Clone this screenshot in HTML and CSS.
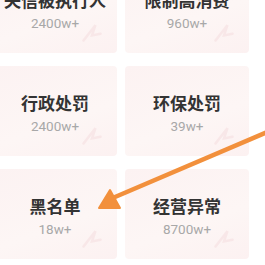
FILE: index.html
```html
<!DOCTYPE html>
<html lang="zh">
<head>
    <meta charset="UTF-8">
    <title>风险类别</title>
    <link rel="stylesheet" href="styles.css">
</head>
<body>
    <div class="grid">
        <div class="card">
            <div class="titulo">失信被执行人</div>
            <div class="numero">2400w+</div>
            <svg class="marca" viewBox="0 0 40 40"><path d="M10 30 L24 12 L20 24 L30 22" fill="none" stroke="#f3d6d8" stroke-width="3" stroke-linecap="round"/></svg>
        </div>
        <div class="card">
            <div class="titulo">限制高消费</div>
            <div class="numero">960w+</div>
            <svg class="marca" viewBox="0 0 40 40"><path d="M10 30 L24 12 L20 24 L30 22" fill="none" stroke="#f3d6d8" stroke-width="3" stroke-linecap="round"/></svg>
        </div>
        <div class="card">
            <div class="titulo">行政处罚</div>
            <div class="numero">2400w+</div>
            <svg class="marca" viewBox="0 0 40 40"><path d="M10 30 L24 12 L20 24 L30 22" fill="none" stroke="#f3d6d8" stroke-width="3" stroke-linecap="round"/></svg>
        </div>
        <div class="card">
            <div class="titulo">环保处罚</div>
            <div class="numero">39w+</div>
            <svg class="marca" viewBox="0 0 40 40"><path d="M10 30 L24 12 L20 24 L30 22" fill="none" stroke="#f3d6d8" stroke-width="3" stroke-linecap="round"/></svg>
        </div>
        <div class="card">
            <div class="titulo">黑名单</div>
            <div class="numero">18w+</div>
            <svg class="marca" viewBox="0 0 40 40"><path d="M10 30 L24 12 L20 24 L30 22" fill="none" stroke="#f3d6d8" stroke-width="3" stroke-linecap="round"/></svg>
        </div>
        <div class="card">
            <div class="titulo">经营异常</div>
            <div class="numero">8700w+</div>
            <svg class="marca" viewBox="0 0 40 40"><path d="M10 30 L24 12 L20 24 L30 22" fill="none" stroke="#f3d6d8" stroke-width="3" stroke-linecap="round"/></svg>
        </div>
    </div>

    <!-- flecha naranja encima -->
    <svg class="flecha" width="265" height="265" viewBox="0 0 265 265">
        <line x1="272" y1="130" x2="108" y2="200" stroke="#f2903c" stroke-width="4.5" stroke-linecap="round"/>
        <polygon points="99,208 110,190 120,208" fill="#f2903c" stroke="#f2903c" stroke-width="2" stroke-linejoin="round"/>
    </svg>
</body>
</html>
```

FILE: styles.css
```css
body{/*cuerpo*/
    margin: 0;
    padding: 0;
    background: #ffffff;
    font-family: "Noto Sans CJK SC", "Noto Sans", sans-serif;
    width: 265px;
    height: 265px;
    overflow: hidden;
    position: relative;
}
.grid{/*rejilla de tarjetas*/
    display: grid;
    grid-template-columns: 124px 124px;
    column-gap: 8px;
    row-gap: 13px;
    margin-top: -37px;
    margin-left: -7px;
}
.card{/*tarjeta*/
    position: relative;
    height: 90px;
    box-sizing: border-box;
    padding-top: 27px;
    background: linear-gradient(160deg, #fcf2f2 0%, #fdf6f5 60%, #fcf1f1 100%);
    border-radius: 4px;
    text-align: center;
    overflow: hidden;
}
.titulo{/*titulo*/
    font-size: 17px;
    line-height: 20px;
    font-weight: bold;
    color: #333333;
}
.numero{/*cifra*/
    margin-top: 5px;
    font-family: Roboto, "Noto Sans", sans-serif;
    font-size: 13.5px;
    line-height: 17px;
    color: #a8a8a8;
}
.marca{/*dibujo de fondo*/
    position: absolute;
    right: 8px;
    bottom: 4px;
    width: 34px;
    height: 34px;
    opacity: 0.4;
}
.flecha{/*flecha*/
    position: absolute;
    top: 0;
    left: 0;
}
```
